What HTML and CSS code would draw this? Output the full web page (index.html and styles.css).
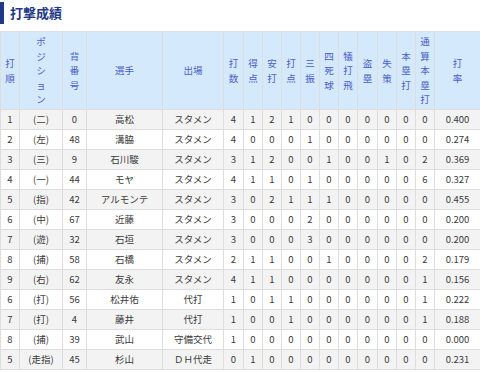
FILE: index.html
```html
<!DOCTYPE html>
<html lang="ja">
<head>
<meta charset="utf-8">
<link rel="stylesheet" href="styles.css">
</head>
<body>
<h2 class="title">打撃成績</h2>
<table class="stats">
<colgroup>
<col class="c-order"><col class="c-pos"><col class="c-num"><col class="c-name"><col class="c-entry">
<col class="c-n20"><col class="c-n19"><col class="c-n19"><col class="c-n19"><col class="c-n19"><col class="c-n19"><col class="c-n19"><col class="c-n20"><col class="c-n19"><col class="c-n19"><col class="c-n19"><col class="c-avg">
</colgroup>
<thead>
<tr>
<th><span class="v">打順</span></th>
<th><span class="v">ポジション</span></th>
<th><span class="v">背番号</span></th>
<th>選手</th>
<th>出場</th>
<th><span class="v">打数</span></th>
<th><span class="v">得点</span></th>
<th><span class="v">安打</span></th>
<th><span class="v">打点</span></th>
<th><span class="v">三振</span></th>
<th><span class="v">四死球</span></th>
<th><span class="v">犠打飛</span></th>
<th><span class="v">盗塁</span></th>
<th><span class="v">失策</span></th>
<th><span class="v">本塁打</span></th>
<th><span class="v">通算本塁打</span></th>
<th><span class="v">打率</span></th>
</tr>
</thead>
<tbody>
<tr><td>1</td><td>(二)</td><td>0</td><td>高松</td><td>スタメン</td><td>4</td><td>1</td><td>2</td><td>1</td><td>0</td><td>0</td><td>0</td><td>0</td><td>0</td><td>0</td><td>0</td><td>0.400</td></tr>
<tr><td>2</td><td>(左)</td><td>48</td><td>溝脇</td><td>スタメン</td><td>4</td><td>0</td><td>0</td><td>0</td><td>1</td><td>0</td><td>0</td><td>0</td><td>0</td><td>0</td><td>0</td><td>0.274</td></tr>
<tr><td>3</td><td>(三)</td><td>9</td><td>石川駿</td><td>スタメン</td><td>3</td><td>1</td><td>2</td><td>0</td><td>0</td><td>1</td><td>0</td><td>0</td><td>1</td><td>0</td><td>2</td><td>0.369</td></tr>
<tr><td>4</td><td>(一)</td><td>44</td><td>モヤ</td><td>スタメン</td><td>4</td><td>1</td><td>1</td><td>0</td><td>1</td><td>0</td><td>0</td><td>0</td><td>0</td><td>0</td><td>6</td><td>0.327</td></tr>
<tr><td>5</td><td>(指)</td><td>42</td><td>アルモンテ</td><td>スタメン</td><td>3</td><td>0</td><td>2</td><td>1</td><td>1</td><td>1</td><td>0</td><td>0</td><td>0</td><td>0</td><td>0</td><td>0.455</td></tr>
<tr><td>6</td><td>(中)</td><td>67</td><td>近藤</td><td>スタメン</td><td>3</td><td>0</td><td>0</td><td>0</td><td>2</td><td>0</td><td>0</td><td>0</td><td>0</td><td>0</td><td>0</td><td>0.200</td></tr>
<tr><td>7</td><td>(遊)</td><td>32</td><td>石垣</td><td>スタメン</td><td>3</td><td>0</td><td>0</td><td>0</td><td>3</td><td>0</td><td>0</td><td>0</td><td>0</td><td>0</td><td>0</td><td>0.200</td></tr>
<tr><td>8</td><td>(捕)</td><td>58</td><td>石橋</td><td>スタメン</td><td>2</td><td>1</td><td>1</td><td>0</td><td>0</td><td>1</td><td>0</td><td>0</td><td>0</td><td>0</td><td>2</td><td>0.179</td></tr>
<tr><td>9</td><td>(右)</td><td>62</td><td>友永</td><td>スタメン</td><td>4</td><td>1</td><td>1</td><td>0</td><td>0</td><td>0</td><td>0</td><td>0</td><td>0</td><td>0</td><td>1</td><td>0.156</td></tr>
<tr><td>6</td><td>(打)</td><td>56</td><td>松井佑</td><td>代打</td><td>1</td><td>0</td><td>1</td><td>1</td><td>0</td><td>0</td><td>0</td><td>0</td><td>0</td><td>0</td><td>1</td><td>0.222</td></tr>
<tr><td>7</td><td>(打)</td><td>4</td><td>藤井</td><td>代打</td><td>1</td><td>0</td><td>0</td><td>1</td><td>0</td><td>0</td><td>0</td><td>0</td><td>0</td><td>0</td><td>1</td><td>0.188</td></tr>
<tr><td>8</td><td>(捕)</td><td>39</td><td>武山</td><td>守備交代</td><td>1</td><td>0</td><td>0</td><td>0</td><td>0</td><td>0</td><td>0</td><td>0</td><td>0</td><td>0</td><td>0</td><td>0.000</td></tr>
<tr><td>5</td><td>(走指)</td><td>45</td><td>杉山</td><td>ＤＨ代走</td><td>0</td><td>1</td><td>0</td><td>0</td><td>0</td><td>0</td><td>0</td><td>0</td><td>0</td><td>0</td><td>0</td><td>0.231</td></tr>
</tbody>
</table>
</body>
</html>
```

FILE: styles.css
```css
html, body {
  margin: 0;
  padding: 0;
  background: #ffffff;
}
body {
  width: 480px;
  font-family: "Noto Sans CJK JP", "Noto Sans", sans-serif;
  color: #3a3a3a;
}
.title {
  margin: 2px 0 7px 0;
  height: 22px;
  line-height: 22px;
  border-left: 4px solid #1f3a86;
  padding-left: 6px;
  font-size: 13px;
  font-weight: bold;
  color: #1f3a86;
}
.stats {
  width: 480px;
  border-collapse: collapse;
  table-layout: fixed;
  font-size: 9.5px;
}
.c-order { width: 19px; }
.c-pos { width: 43px; }
.c-num { width: 24px; }
.c-name { width: 76px; }
.c-entry { width: 61px; }
.c-n20 { width: 20px; }
.c-n19 { width: 19px; }
.c-avg { width: 46px; }
.stats th, .stats td {
  border: 1px solid #dddddd;
  text-align: center;
  vertical-align: middle;
  padding: 0;
  white-space: normal;
}
.stats th {
  background: #d5e9fc;
  color: #4a60c6;
  font-weight: normal;
  line-height: 14.5px;
  height: 77px;
}
.v {
  display: inline-block;
  width: 1em;
  word-break: break-all;
}
.stats td {
  height: 19px;
  line-height: 19px;
  white-space: nowrap;
}
.stats tbody tr:nth-child(odd) td {
  background: #f3f3f3;
}
```
